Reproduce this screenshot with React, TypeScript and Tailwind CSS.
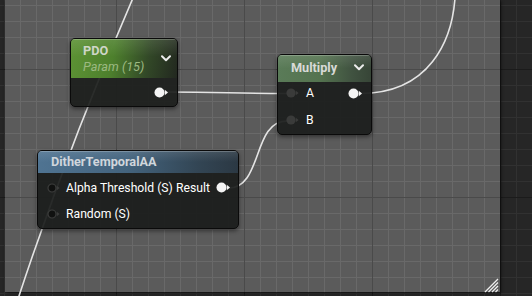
import React from "react";

const Chevron = () => (
  <svg width="10" height="7" viewBox="0 0 10 7" className="shrink-0">
    <path d="M1 1.2 L5 5.2 L9 1.2" stroke="#ececec" strokeWidth="2" fill="none" strokeLinecap="round" strokeLinejoin="round" />
  </svg>
);

const OutPin = () => (
  <svg width="15" height="11" viewBox="0 0 15 11" className="shrink-0">
    <circle cx="5.5" cy="5.5" r="5" fill="#f4f4f4" />
    <path d="M10.8 2.8 L14 5.5 L10.8 8.2 Z" fill="#f4f4f4" />
  </svg>
);

const InPinGray = () => (
  <svg width="13" height="10" viewBox="0 0 13 10" className="shrink-0">
    <circle cx="5" cy="5" r="4.6" fill="#3a3b3a" />
    <path d="M9.8 2.8 L12.6 5 L9.8 7.2 Z" fill="#3a3b3a" />
  </svg>
);

const InPinDark = () => (
  <svg width="13" height="10" viewBox="0 0 13 10" className="shrink-0">
    <circle cx="5" cy="5" r="4" fill="#101110" stroke="#3c3d3c" strokeWidth="1.2" />
    <path d="M9.8 2.8 L12.6 5 L9.8 7.2 Z" fill="#3c3d3c" />
  </svg>
);

export default function App() {
  return (
    <div className="relative w-[532px] h-[296px] overflow-hidden bg-[#262626] bg-[image:linear-gradient(to_right,#1b1b1b_1px,transparent_1px),linear-gradient(to_bottom,#1b1b1b_1px,transparent_1px),linear-gradient(to_right,#313131_1px,transparent_1px),linear-gradient(to_bottom,#313131_1px,transparent_1px)] bg-[length:128px_128px,128px_128px,16px_16px,16px_16px] bg-[position:116px_69px,116px_69px,4px_5px,4px_5px] font-['Roboto','Noto_Sans',sans-serif]">
      {/* comment box */}
      <div className="ml-[5px] w-[495px] h-[292px] bg-[#5b5b5b] bg-[image:linear-gradient(to_right,#4a4a4a_1px,transparent_1px),linear-gradient(to_bottom,#4a4a4a_1px,transparent_1px),linear-gradient(to_right,#696969_1px,transparent_1px),linear-gradient(to_bottom,#696969_1px,transparent_1px)] bg-[length:128px_128px,128px_128px,16px_16px,16px_16px] bg-[position:111px_69px,111px_69px,15px_5px,15px_5px] shadow-[1px_1px_3px_rgba(0,0,0,0.6)]" />

      {/* wires */}
      <svg className="absolute left-0 top-0 pointer-events-none" width="532" height="296" viewBox="0 0 532 296">
        <g stroke="#e4e4e4" strokeWidth="1.6" fill="none" strokeLinecap="round">
          <path d="M133,-2 Q67,150 18,299" />
          <path d="M166,92 C225,92 230,93.5 287,93.5" />
          <path d="M228,188.3 C263,188.3 252,121 287,121" />
          <path d="M360,93.5 C430,93.5 452,40 455,-2" />
        </g>
      </svg>

      {/* PDO node */}
      <div className="absolute left-[70px] top-[38px] w-[108px] h-[69px] rounded-[5px] border border-[#0a0a0a] overflow-hidden flex flex-col bg-[rgba(29,31,29,0.93)] shadow-[0_2px_4px_rgba(0,0,0,0.45)]">
        <div className="h-[39px] shrink-0 flex items-center pl-[12px] pr-[6px] bg-[image:linear-gradient(to_bottom,rgba(255,255,255,0.10),rgba(255,255,255,0)_45%),linear-gradient(100deg,rgba(98,156,54,0.92)_0%,rgba(82,138,46,0.9)_40%,rgba(52,76,40,0.9)_72%,rgba(34,40,31,0.92)_100%)] shadow-[inset_0_1px_0_rgba(255,255,255,0.22)]">
          <div className="flex-1 flex flex-col text-[12.7px] leading-[16px]">
            <span className="font-bold text-[#cfd6c8]">PDO</span>
            <span className="italic text-[#9cb981]">Param (15)</span>
          </div>
          <Chevron />
        </div>
        <div className="flex-1 flex items-center justify-end pr-[8px]">
          <OutPin />
        </div>
      </div>

      {/* Multiply node */}
      <div className="absolute left-[277px] top-[54px] w-[95px] h-[81px] rounded-[5px] border border-[#0a0a0a] overflow-hidden flex flex-col bg-[rgba(30,32,31,0.95)] shadow-[0_2px_4px_rgba(0,0,0,0.45)]">
        <div className="h-[27px] shrink-0 flex items-center pl-[13px] pr-[7px] pb-[2px] bg-[image:linear-gradient(to_bottom,rgba(255,255,255,0.10),rgba(255,255,255,0)_50%),linear-gradient(to_right,#5a7b58_0%,#54734f_45%,#405240_80%,#374537_100%)] shadow-[inset_0_1px_0_rgba(255,255,255,0.22)]">
          <span className="flex-1 font-bold text-[12.7px] leading-[16px] text-[#d8dad7]">Multiply</span>
          <Chevron />
        </div>
        <div className="flex flex-col gap-[5px]">
          <div className="h-[22px] flex items-center justify-between pl-[8px] pr-[8px]">
            <div className="flex items-center gap-[7px]">
              <InPinGray />
              <span className="text-[12.2px] leading-none text-white">A</span>
            </div>
            <OutPin />
          </div>
          <div className="h-[22px] flex items-center pl-[8px]">
            <div className="flex items-center gap-[7px]">
              <InPinGray />
              <span className="text-[12.2px] leading-none text-white">B</span>
            </div>
          </div>
        </div>
      </div>

      {/* DitherTemporalAA node */}
      <div className="absolute left-[37px] top-[150px] w-[202px] h-[79px] rounded-[5px] border border-[#0a0a0a] overflow-hidden flex flex-col bg-[rgba(27,29,28,0.93)] shadow-[0_2px_4px_rgba(0,0,0,0.45)]">
        <div className="h-[22px] shrink-0 flex items-center pl-[13px] bg-[image:linear-gradient(to_bottom,rgba(255,255,255,0.10),rgba(255,255,255,0)_50%),linear-gradient(to_right,rgba(82,120,152,0.95)_0%,rgba(70,104,132,0.93)_45%,rgba(52,72,88,0.93)_80%,rgba(44,58,70,0.93)_100%)] shadow-[inset_0_1px_0_rgba(255,255,255,0.22)]">
          <span className="font-bold text-[12.7px] leading-[16px] text-[#d0d6dc]">DitherTemporalAA</span>
        </div>
        <div className="flex flex-col gap-[4px] pt-[4px]">
          <div className="h-[22px] flex items-center justify-between pl-[9px] pr-[7px]">
            <div className="flex items-center gap-[6px]">
              <InPinDark />
              <span className="text-[12.2px] leading-none text-white">Alpha Threshold (S)</span>
            </div>
            <div className="flex items-center gap-[6px]">
              <span className="text-[12.2px] leading-none text-white">Result</span>
              <OutPin />
            </div>
          </div>
          <div className="h-[22px] flex items-center pl-[9px]">
            <div className="flex items-center gap-[6px]">
              <InPinDark />
              <span className="text-[12.2px] leading-none text-white">Random (S)</span>
            </div>
          </div>
        </div>
      </div>

      {/* resize handle */}
      <svg className="absolute left-[484px] top-[278px]" width="15" height="15" viewBox="0 0 15 15">
        <g stroke="#f0f0f0" strokeWidth="1.3">
          <line x1="1" y1="14" x2="14" y2="1" />
          <line x1="4.5" y1="14" x2="14" y2="4.5" />
          <line x1="8" y1="14" x2="14" y2="8" />
          <line x1="11.5" y1="14" x2="14" y2="11.5" />
        </g>
      </svg>
    </div>
  );
}
